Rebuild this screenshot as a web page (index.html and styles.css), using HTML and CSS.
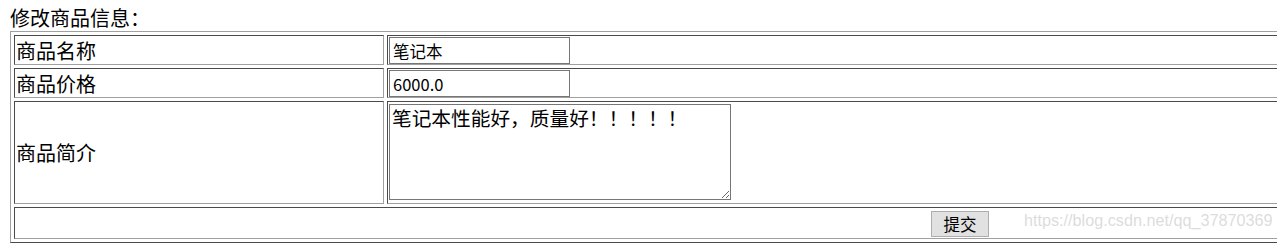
FILE: index.html
```html
<!DOCTYPE html>
<html lang="zh">
<head>
<meta charset="utf-8">
<title>修改商品信息</title>
<link rel="stylesheet" href="styles.css">
</head>
<body>
<div class="title">修改商品信息：</div>
<form class="form">
<div class="clip">
<table class="grid">
<tr class="row-short">
<td class="label">商品名称</td>
<td class="field"><input class="text-input" type="text" value="笔记本"></td>
</tr>
<tr class="row-short">
<td class="label">商品价格</td>
<td class="field"><input class="text-input" type="text" value="6000.0"></td>
</tr>
<tr class="row-tall">
<td class="label">商品简介</td>
<td class="field"><textarea class="desc">笔记本性能好，质量好！！！！！</textarea></td>
</tr>
<tr class="row-submit">
<td class="submit-cell" colspan="2"><button class="submit" type="button">提交</button></td>
</tr>
</table>
</div>
</form>
<div class="watermark">https://blog.csdn.net/qq_37870369</div>
</body>
</html>
```

FILE: styles.css
```css
html, body {
  overflow: hidden;
}
body {
  margin: 0;
  padding: 6px 0 0 10px;
  background: #fff;
  color: #000;
  font-family: "Noto Sans CJK SC", "Noto Sans", sans-serif;
  font-size: 20px;
}
.title {
  line-height: 24px;
  height: 25px;
}
.form {
  margin: 0;
}
.clip {
  overflow: hidden;
  width: 1267px;
}
.grid {
  width: 1900px;
  border-collapse: separate;
  border-spacing: 3px;
  border: 1px solid;
  border-color: #a0a0a0 #4a4a4a #4a4a4a #a0a0a0;
}
.grid td {
  border: 1px solid;
  border-color: #4a4a4a #a0a0a0 #a0a0a0 #4a4a4a;
  padding: 1px 1px 0 1px;
  line-height: 24px;
  vertical-align: middle;
  box-sizing: border-box;
}
.label {
  width: 370px;
}
.row-short td {
  height: 30px;
}
.row-tall td {
  height: 103px;
}
.row-submit td {
  height: 32px;
}
.text-input {
  display: block;
  box-sizing: border-box;
  width: 181px;
  height: 27px;
  margin: 0;
  padding: 0 3px;
  border: 1px solid #767676;
  font-family: "Noto Sans CJK SC", "Liberation Sans", sans-serif;
  font-size: 16.5px;
  color: #000;
}
.desc {
  display: block;
  box-sizing: border-box;
  width: 342px;
  height: 96px;
  margin: 0 0 3px 0;
  padding: 2px 2px;
  border: 1px solid #767676;
  font-family: "Noto Sans CJK SC", serif;
  font-size: 19.7px;
  line-height: 22px;
  color: #000;
}
.submit-cell {
  text-align: center;
}
.submit {
  box-sizing: border-box;
  width: 58px;
  height: 26px;
  margin: 1px 0 0;
  padding: 0;
  border: 1px solid #adadad;
  background: #e1e1e1;
  color: #000;
  font-family: "Noto Sans CJK SC", sans-serif;
  font-size: 16.5px;
  line-height: 22px;
}
.watermark {
  position: absolute;
  left: 1024px;
  top: 211px;
  font-family: "Liberation Sans", Arial, sans-serif;
  font-size: 16.2px;
  color: rgba(190, 190, 190, 0.55);
  white-space: nowrap;
}
```
